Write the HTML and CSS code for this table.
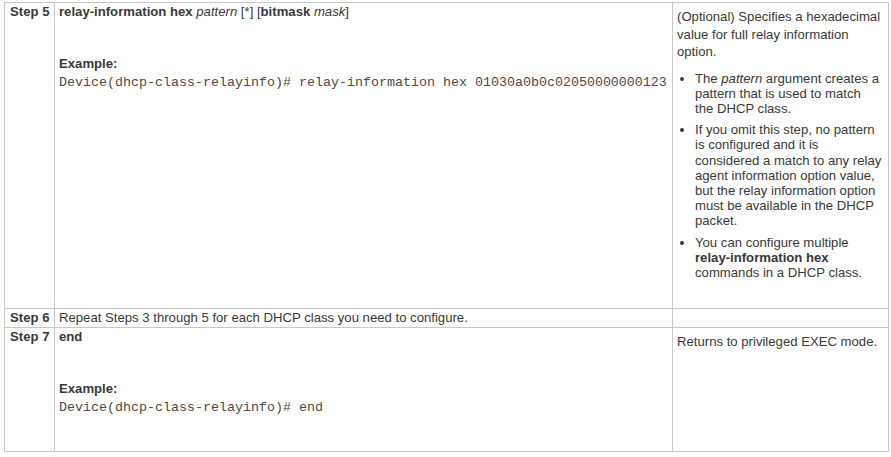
FILE: index.html
```html
<!DOCTYPE html>
<html>
<head>
<meta charset="utf-8">
<link rel="stylesheet" href="styles.css">
</head>
<body>
<table class="steps">
  <colgroup>
    <col class="c-step">
    <col class="c-cmd">
    <col class="c-desc">
  </colgroup>
  <tr class="r5">
    <th class="step">Step 5</th>
    <td class="cmd">
      <p class="cmdname"><b>relay-information hex</b> <i>pattern</i> [*] [<b>bitmask</b> <i>mask</i>]</p>
      <p class="ex-label"><b>Example:</b></p>
      <p class="code">Device(dhcp-class-relayinfo)# relay-information hex 01030a0b0c02050000000123</p>
    </td>
    <td class="desc">
      <p>(Optional) Specifies a hexadecimal value for full relay information option.</p>
      <ul>
        <li>The <i>pattern</i> argument creates a pattern that is used to match the DHCP class.</li>
        <li>If you omit this step, no pattern is configured and it is considered a match to any relay agent information option value, but the relay information option must be available in the DHCP packet.</li>
        <li>You can configure multiple <b>relay-information hex</b> commands in a DHCP class.</li>
      </ul>
    </td>
  </tr>
  <tr class="r6">
    <th class="step">Step 6</th>
    <td class="cmd"><p class="cmdname">Repeat Steps 3 through 5 for each DHCP class you need to configure.</p></td>
    <td class="desc"></td>
  </tr>
  <tr class="r7">
    <th class="step">Step 7</th>
    <td class="cmd">
      <p class="cmdname"><b>end</b></p>
      <p class="ex-label"><b>Example:</b></p>
      <p class="code">Device(dhcp-class-relayinfo)# end</p>
    </td>
    <td class="desc">
      <p>Returns to privileged EXEC mode.</p>
    </td>
  </tr>
</table>
</body>
</html>
```
FILE: styles.css
```css
html, body {
  margin: 0;
  padding: 0;
  background: #ffffff;
}
body {
  padding: 2px 0 0 4px;
  font-family: "Liberation Sans", Arial, sans-serif;
  font-size: 13.15px;
  color: #39393b;
}
.steps {
  border-collapse: collapse;
  table-layout: fixed;
  width: 884px;
}
.c-step { width: 50px; }
.c-cmd { width: 618px; }
.c-desc { width: 216px; }
.steps th, .steps td {
  border: 1px solid #c8c8c8;
  vertical-align: top;
  text-align: left;
  padding: 1px 5px 2px 5px;
  line-height: 15px;
}
.steps th.step {
  font-weight: bold;
  white-space: nowrap;
  padding-left: 5px;
  padding-right: 0;
}
.steps td.cmd {
  padding-left: 4px;
}
.steps td.desc {
  padding-left: 4px;
  padding-right: 6px;
}
.r5 { height: 306px; }
.r6 { height: 19px; }
.r7 { height: 124px; }
p { margin: 0; }
.ex-label {
  margin-top: 37px;
}
.code {
  margin-top: 2px;
  font-family: "Liberation Mono", "Courier New", monospace;
  font-size: 13.33px;
  line-height: 19px;
  color: #4f4a45;
  white-space: nowrap;
}
.desc p {
  margin-top: 4px;
  line-height: 17.5px;
}
.desc ul {
  margin: 10px 0 0 0;
  padding-left: 18px;
}
.desc li {
  line-height: 15.2px;
  margin-bottom: 6px;
}
```
